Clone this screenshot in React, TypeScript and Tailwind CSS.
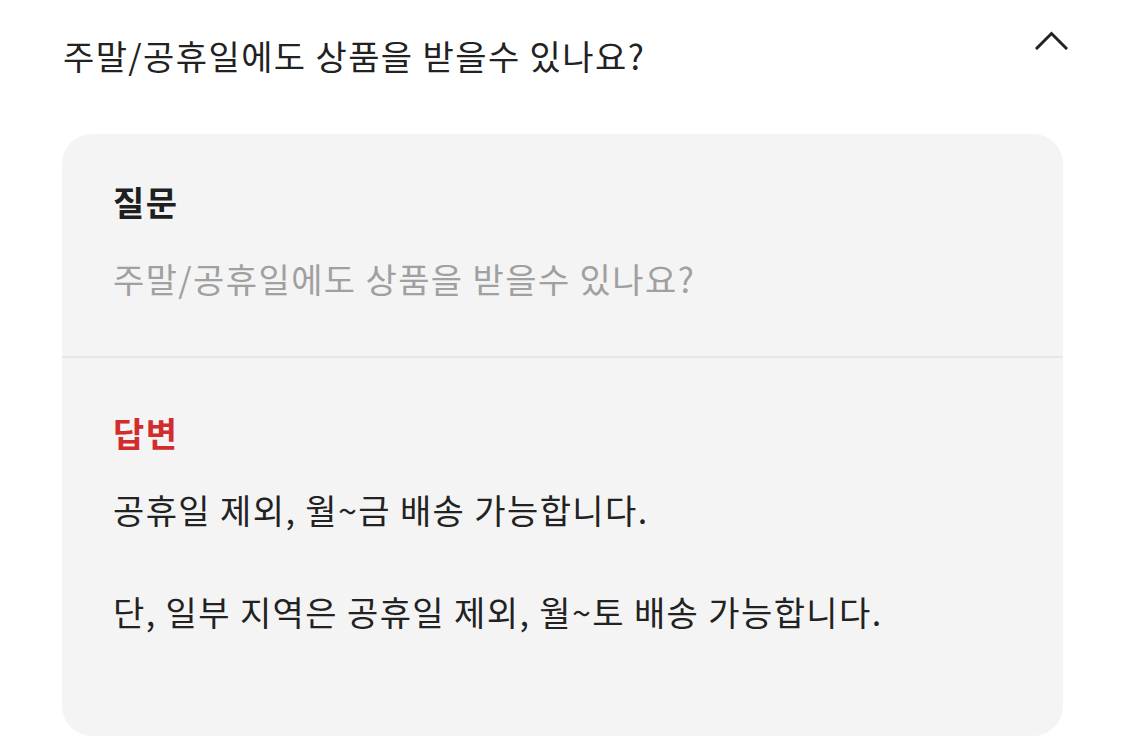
import React from 'react';

const font = { fontFamily: '"Noto Sans CJK KR", "Noto Sans", sans-serif' };

const ChevronUp = () => (
  <svg width="33" height="19" viewBox="0 0 33 19" fill="none" className="text-[#222]">
    <polyline
      points="2,17 16.5,2.5 31,17"
      stroke="currentColor"
      strokeWidth="3"
      strokeLinecap="square"
    />
  </svg>
);

const FaqItem = () => {
  const question = '주말/공휴일에도 상품을 받을수 있나요?';

  return (
    <div className="w-[1125px] min-h-[750px] bg-white" style={font}>
      <div className="flex items-start justify-between pl-[63px] pr-[57px] pt-[30px] pb-[53px]">
        <h2 className="text-[34px] leading-[51px] tracking-[1.4px] text-[#222] font-normal">
          {question}
        </h2>
        <div className="pt-[1px]">
          <ChevronUp />
        </div>
      </div>

      <div className="mx-[62px] bg-[#f4f4f4] rounded-[30px] overflow-hidden">
        <div className="px-[51px] pt-[42px] pb-[52px]">
          <p className="text-[34px] leading-[51px] tracking-[1.4px] font-bold text-[#1f1f1f]">질문</p>
          <p className="mt-[26px] text-[34px] leading-[51px] tracking-[1.4px] text-[#a0a0a0]">
            {question}
          </p>
        </div>
        <div className="h-[2px] bg-[#e6e6e6]" />
        <div className="px-[51px] pt-[49px] pb-[99px]">
          <p className="text-[34px] leading-[51px] tracking-[1.4px] font-bold text-[#d22d2d]">답변</p>
          <p className="mt-[26px] text-[34px] leading-[51px] tracking-[1.4px] text-[#222] whitespace-pre-line">
            {'공휴일 제외, 월~금 배송 가능합니다.\n\n단, 일부 지역은 공휴일 제외, 월~토 배송 가능합니다.'}
          </p>
        </div>
      </div>
    </div>
  );
};

export default function App() {
  return <FaqItem />;
}
